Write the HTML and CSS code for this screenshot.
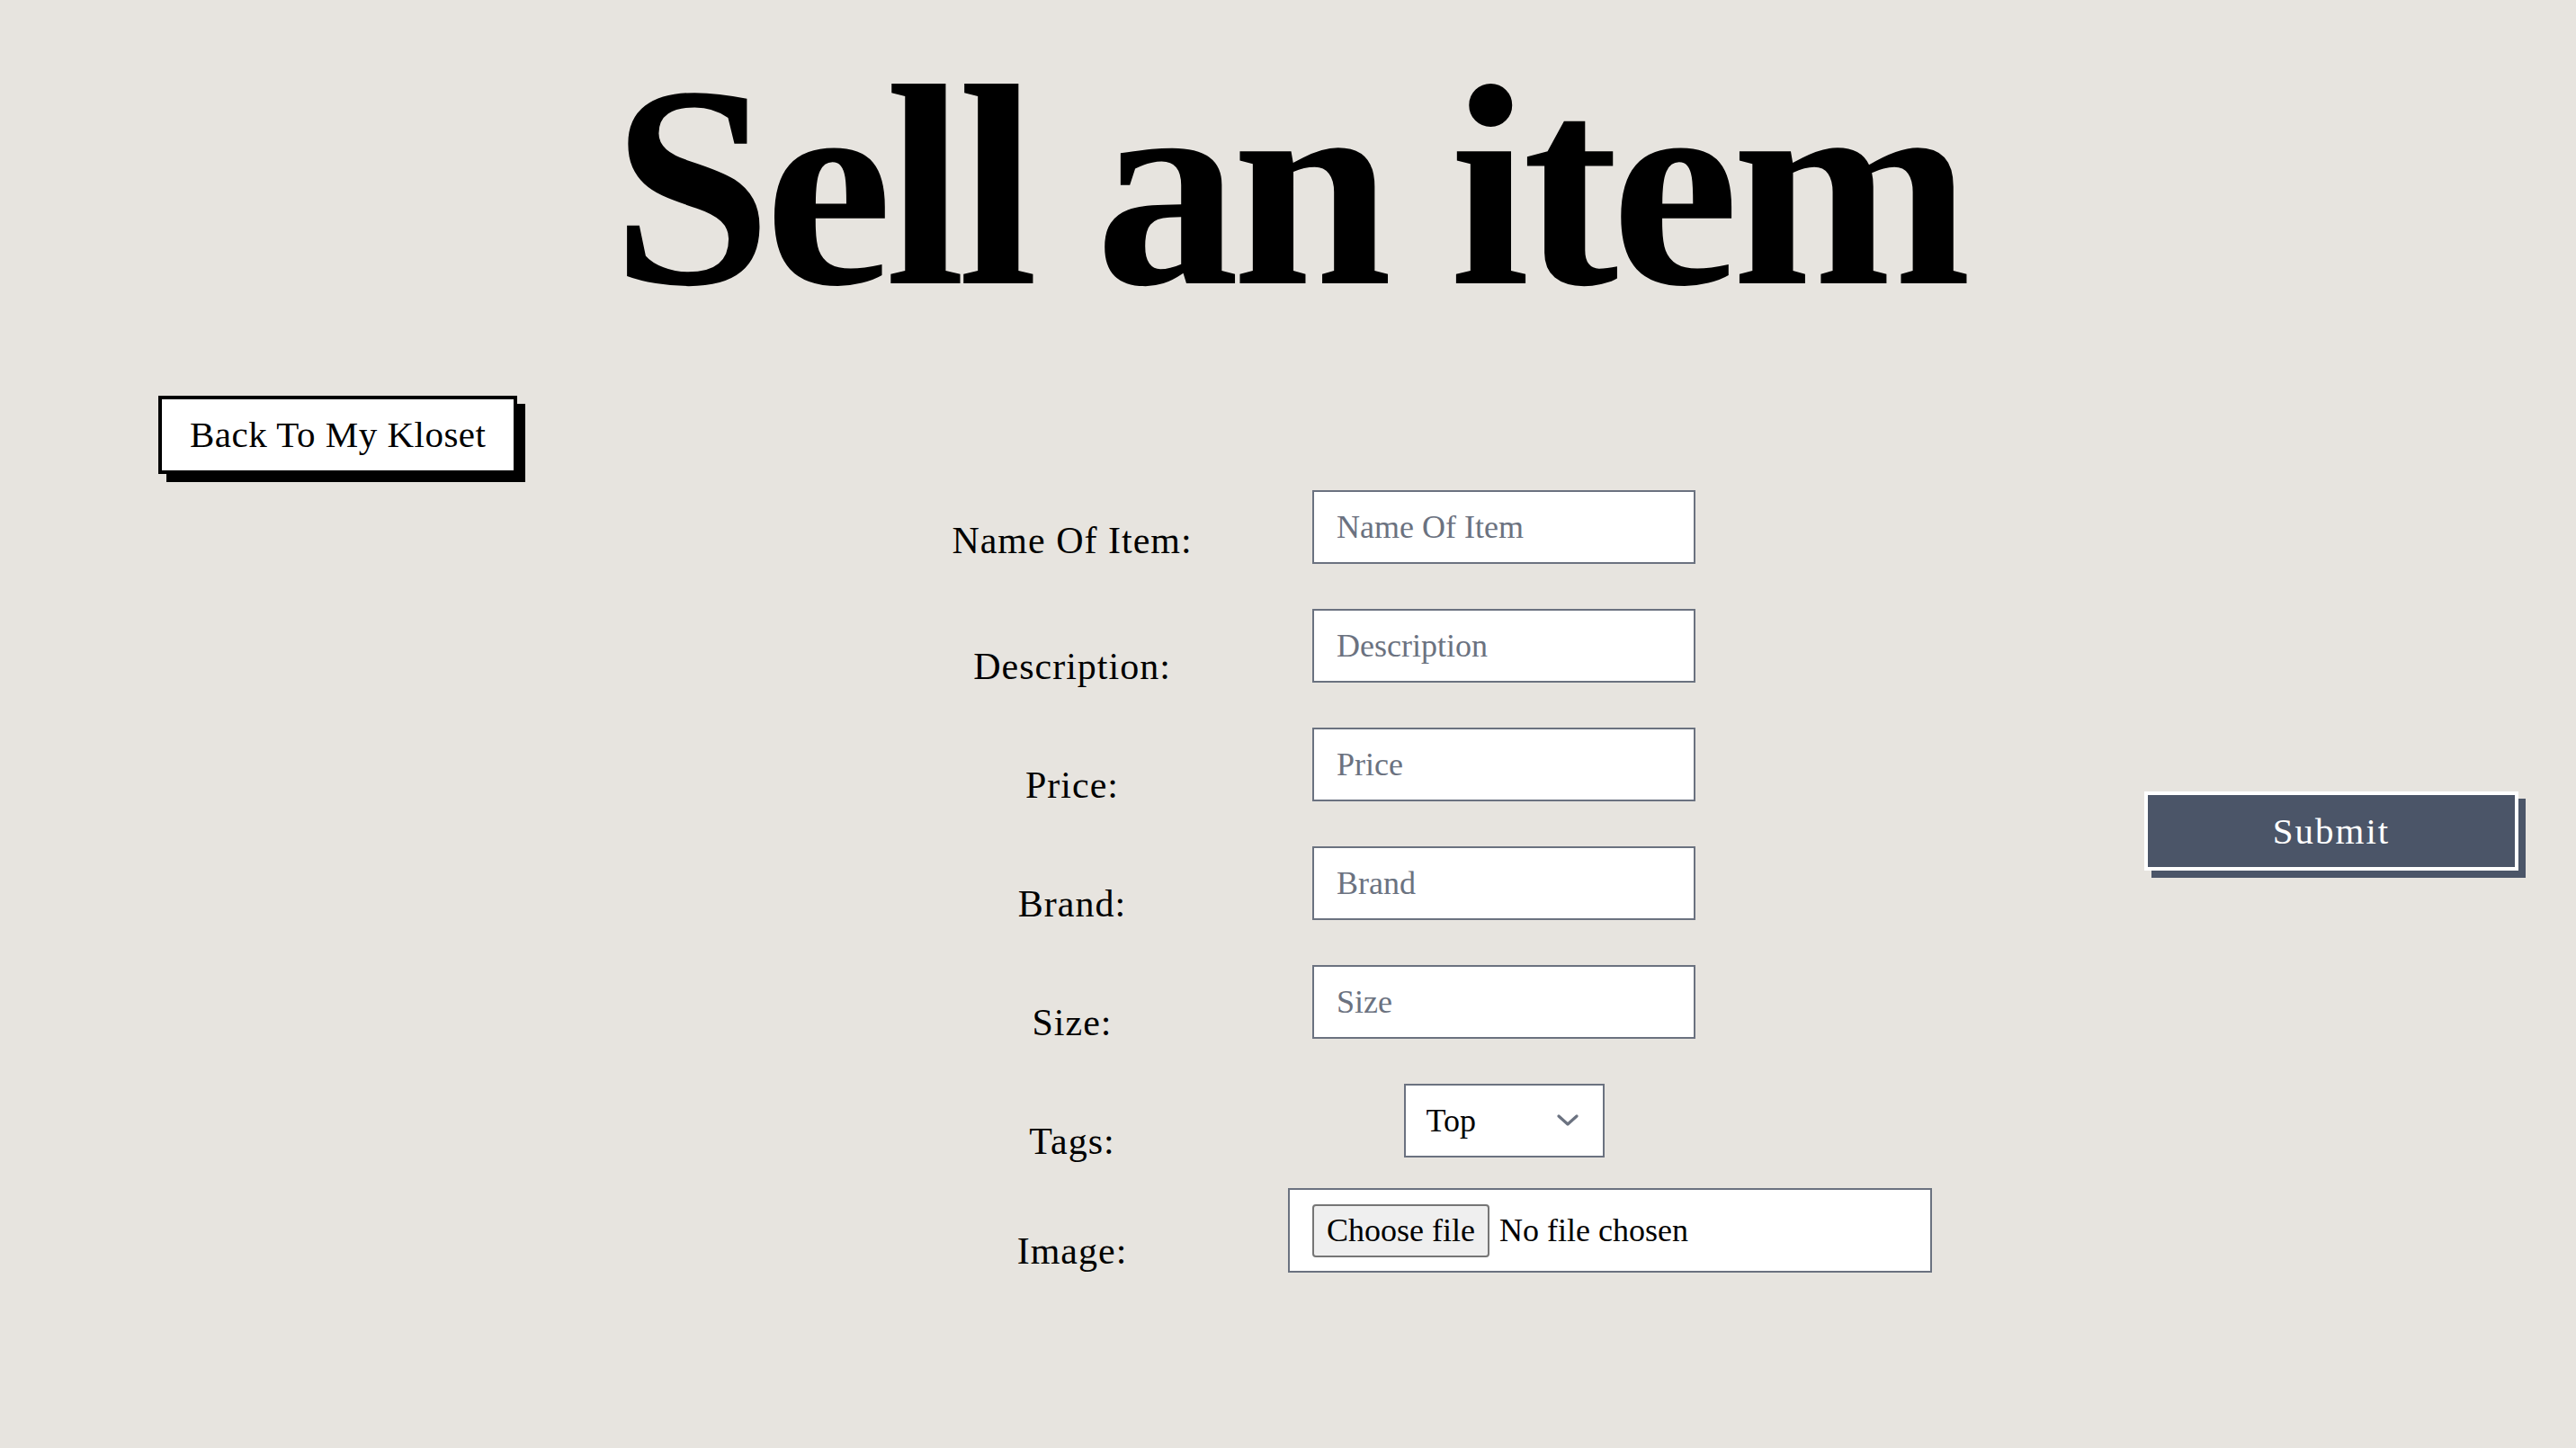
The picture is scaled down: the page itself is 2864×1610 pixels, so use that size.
FILE: index.html
```html
<!DOCTYPE html>
<html lang="en">
<head>
<meta charset="utf-8">
<title>Sell an item</title>
<link rel="stylesheet" href="styles.css">
</head>
<body>
<main class="page">
  <h1 class="title">Sell an item</h1>
  <div class="layout">
    <div class="side side-left">
      <button type="button" class="btn-back">Back To My Kloset</button>
    </div>
    <form class="sell-form">
      <div class="field field-first">
        <label class="field-label" for="name">Name Of Item:</label>
        <div class="field-control"><input class="text-input" id="name" type="text" placeholder="Name Of Item"></div>
      </div>
      <div class="field">
        <label class="field-label" for="desc">Description:</label>
        <div class="field-control"><input class="text-input" id="desc" type="text" placeholder="Description"></div>
      </div>
      <div class="field">
        <label class="field-label" for="price">Price:</label>
        <div class="field-control"><input class="text-input" id="price" type="text" placeholder="Price"></div>
      </div>
      <div class="field">
        <label class="field-label" for="brand">Brand:</label>
        <div class="field-control"><input class="text-input" id="brand" type="text" placeholder="Brand"></div>
      </div>
      <div class="field">
        <label class="field-label" for="size">Size:</label>
        <div class="field-control"><input class="text-input" id="size" type="text" placeholder="Size"></div>
      </div>
      <div class="field">
        <label class="field-label" for="tags">Tags:</label>
        <div class="field-control">
          <span class="select-wrap">
            <select class="select-input" id="tags">
              <option>Top</option>
              <option>Bottom</option>
              <option>Shoes</option>
            </select>
            <svg class="select-chevron" viewBox="0 0 24 13" width="24" height="13" aria-hidden="true">
              <path d="M2 2 L12 11 L22 2" fill="none" stroke="#6b7280" stroke-width="3.2" stroke-linecap="round" stroke-linejoin="round"/>
            </svg>
          </span>
        </div>
      </div>
      <div class="field field-file">
        <label class="field-label" for="image">Image:</label>
        <div class="field-control">
          <label class="file-field">
            <input class="file-native" id="image" type="file">
            <span class="file-btn">Choose file</span>
            <span class="file-name">No file chosen</span>
          </label>
        </div>
      </div>
    </form>
    <div class="side side-right">
      <button type="submit" class="btn-submit">Submit</button>
    </div>
  </div>
</main>
</body>
</html>
```

FILE: styles.css
```css
html, body {
  margin: 0;
  padding: 0;
}

body {
  background: #e7e4df;
  color: #000;
  font-family: "Liberation Serif", "Times New Roman", serif;
  width: 2864px;
  min-height: 1610px;
}

.page {
  display: flex;
  flex-direction: column;
}

.title {
  margin: 47px 0 0;
  font-size: 320px;
  line-height: 320px;
  font-weight: 700;
  letter-spacing: -8px;
  text-align: center;
  color: #000;
}

.layout {
  margin-top: 73px;
  display: grid;
  grid-template-columns: 1fr 960px 1fr;
}

.side-left {
  align-self: start;
  justify-self: start;
  margin-left: 176px;
}

.side-right {
  align-self: center;
  justify-self: end;
  margin-right: 64px;
  margin-bottom: 8px;
}

.btn-back {
  display: block;
  font-family: inherit;
  font-size: 41px;
  letter-spacing: 0.5px;
  line-height: 79px;
  height: 87px;
  padding: 0 31px;
  background: #fff;
  color: #000;
  border: 4px solid #000;
  box-shadow: 9px 9px 0 0 #000;
  cursor: pointer;
}

.btn-submit {
  display: block;
  width: 416px;
  height: 88px;
  padding: 0;
  font-family: inherit;
  font-size: 41px;
  letter-spacing: 2px;
  line-height: 80px;
  background: #4b5568;
  color: #fff;
  border: 4px solid #fff;
  box-shadow: 8px 8px 0 0 #4b5568;
  cursor: pointer;
}

.sell-form {
  padding-top: 105px;
  display: flex;
  flex-direction: column;
  gap: 50px;
}

.field {
  display: grid;
  grid-template-columns: 480px 480px;
  align-items: center;
}

.field-file {
  margin-top: -16px;
}

.field-label {
  display: block;
  text-align: center;
  font-size: 42px;
  letter-spacing: 1px;
  line-height: 36px;
  padding-top: 46px;
}

.field-first .field-label {
  padding-top: 30px;
}

.field-control {
  text-align: center;
  white-space: nowrap;
}

.text-input {
  box-sizing: border-box;
  width: 426px;
  height: 82px;
  padding: 0 25px;
  border: 2px solid #6b7280;
  background: #fff;
  font-family: inherit;
  font-size: 36px;
  color: #000;
  outline: none;
  vertical-align: middle;
}

.text-input::placeholder {
  color: #6b7280;
  opacity: 1;
}

.select-wrap {
  position: relative;
  display: inline-block;
  vertical-align: middle;
}

.select-input {
  -webkit-appearance: none;
  appearance: none;
  box-sizing: border-box;
  display: block;
  width: 223px;
  height: 82px;
  padding: 0 60px 0 23px;
  border: 2px solid #6b7280;
  border-radius: 0;
  background: #fff;
  font-family: inherit;
  font-size: 36px;
  color: #000;
  outline: none;
}

.select-chevron {
  position: absolute;
  right: 29px;
  top: 34px;
  pointer-events: none;
}

.file-field {
  box-sizing: border-box;
  display: flex;
  align-items: center;
  gap: 11px;
  width: 716px;
  height: 94px;
  padding: 0 25px;
  border: 2px solid #6b7280;
  background: #fff;
  font-size: 36px;
  color: #000;
  text-align: left;
  cursor: pointer;
}

.file-native {
  position: absolute;
  width: 1px;
  height: 1px;
  opacity: 0;
  overflow: hidden;
}

.file-btn {
  box-sizing: border-box;
  display: flex;
  align-items: center;
  height: 59px;
  padding: 0 14px;
  border: 2px solid #767676;
  border-radius: 4px;
  background: #efefef;
  color: #000;
}

.file-name {
  color: #000;
}
```
